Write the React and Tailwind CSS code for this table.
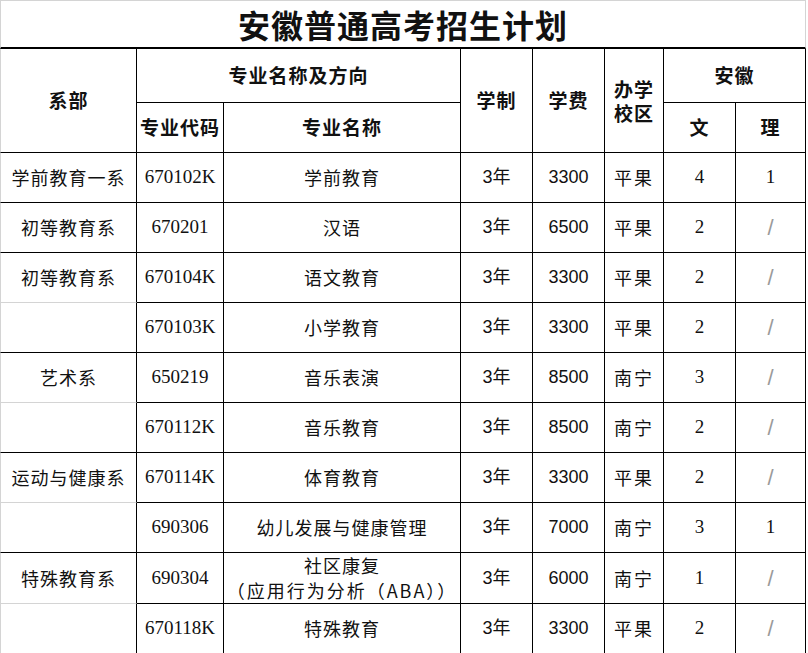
import React from "react";

const rows = [
  { dept: "学前教育一系", code: "670102K", name: "学前教育", fee: "3300", campus: "平果", wen: "4", li: "1" },
  { dept: "初等教育系", code: "670201", name: "汉语", fee: "6500", campus: "平果", wen: "2", li: "/" },
  { dept: "初等教育系", code: "670104K", name: "语文教育", fee: "3300", campus: "平果", wen: "2", li: "/" },
  { dept: "", code: "670103K", name: "小学教育", fee: "3300", campus: "平果", wen: "2", li: "/" },
  { dept: "艺术系", code: "650219", name: "音乐表演", fee: "8500", campus: "南宁", wen: "3", li: "/" },
  { dept: "", code: "670112K", name: "音乐教育", fee: "8500", campus: "南宁", wen: "2", li: "/" },
  { dept: "运动与健康系", code: "670114K", name: "体育教育", fee: "3300", campus: "平果", wen: "2", li: "/" },
  { dept: "", code: "690306", name: "幼儿发展与健康管理", fee: "7000", campus: "南宁", wen: "3", li: "1" },
  { dept: "特殊教育系", code: "690304", name: ["社区康复", "（应用行为分析（ABA））"], fee: "6000", campus: "南宁", wen: "1", li: "/" },
  { dept: "", code: "670118K", name: "特殊教育", fee: "3300", campus: "平果", wen: "2", li: "/" },
];

const cell = "border-r border-b border-black text-center align-middle p-0";
const head = "border-r border-b border-black text-center align-middle p-0 font-bold text-[19px] tracking-[1px]";
const serif = "font-['Liberation_Serif','Noto_Sans_CJK_SC',serif] text-[19px]";
const sans = "font-['Liberation_Sans','Noto_Sans_CJK_SC',sans-serif]";

export default function App() {
  return (
    <div className="w-[808px] h-[653px] bg-white overflow-hidden font-['Noto_Sans_CJK_SC',sans-serif] text-[#111]">
      <table className="table-fixed border-separate border-spacing-0 w-[806px]">
        <colgroup>
          <col className="w-[137px]" />
          <col className="w-[87px]" />
          <col className="w-[237px]" />
          <col className="w-[72px]" />
          <col className="w-[72px]" />
          <col className="w-[59px]" />
          <col className="w-[72px]" />
          <col className="w-[70px]" />
        </colgroup>
        <tbody>
          <tr className="h-[49px]">
            <td
              colSpan={8}
              className="border-t border-l border-r border-[#d4d4d4] border-b-2 border-b-black text-center align-middle p-0 text-[32px] font-bold tracking-[1px] leading-none"
            >
              安徽普通高考招生计划
            </td>
          </tr>
          <tr className="h-[54px]">
            <td rowSpan={2} className={`${head} border-l border-l-[#d4d4d4]`}>系部</td>
            <td colSpan={2} className={head}>专业名称及方向</td>
            <td rowSpan={2} className={head}>学制</td>
            <td rowSpan={2} className={head}>学费</td>
            <td rowSpan={2} className={`${head} leading-[24px]`}>
              <div>办学</div>
              <div>校区</div>
            </td>
            <td colSpan={2} className={head}>安徽</td>
          </tr>
          <tr className="h-[50px]">
            <td className={head}>专业代码</td>
            <td className={head}>专业名称</td>
            <td className={head}>文</td>
            <td className={head}>理</td>
          </tr>
          {rows.map((r, i) => {
            const nextEmpty = rows[i + 1] && rows[i + 1].dept === "";
            return (
              <tr key={i} className="h-[50px] text-[18px]">
                <td
                  className={`${cell} tracking-[1px] border-l border-l-[#d4d4d4] ${nextEmpty ? "border-b-[#d4d4d4]" : ""}`}
                >
                  {r.dept}
                </td>
                <td className={`${cell} ${serif}`}>{r.code}</td>
                <td className={`${cell} tracking-[1px] leading-[25px]`}>
                  {Array.isArray(r.name) ? (
                    <>
                      <div>{r.name[0]}</div>
                      <div className="tracking-[2px]">{r.name[1]}</div>
                    </>
                  ) : (
                    r.name
                  )}
                </td>
                <td className={`${cell} ${sans}`}>3年</td>
                <td className={`${cell} ${sans}`}>{r.fee}</td>
                <td className={`${cell} tracking-[2px]`}>{r.campus}</td>
                <td className={`${cell} ${serif}`}>{r.wen}</td>
                {r.li === "/" ? (
                  <td className={`${cell} text-[22px] text-[#9a9a9a] font-['Liberation_Sans',sans-serif] font-light`}>/</td>
                ) : (
                  <td className={`${cell} ${serif}`}>{r.li}</td>
                )}
              </tr>
            );
          })}
        </tbody>
      </table>
    </div>
  );
}
